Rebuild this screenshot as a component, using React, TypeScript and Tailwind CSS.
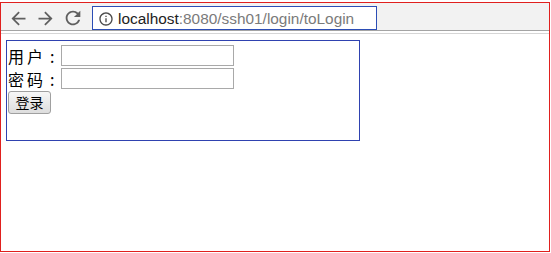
import React from "react";

function BackIcon() {
  return (
    <svg viewBox="0 0 24 24" className="w-[21px] h-[21px] shrink-0" fill="#5f5f5f">
      <path d="M20 11H7.83l5.59-5.59L12 4l-8 8 8 8 1.41-1.41L7.83 13H20v-2z" />
    </svg>
  );
}

function ForwardIcon() {
  return (
    <svg viewBox="0 0 24 24" className="w-[21px] h-[21px] shrink-0" fill="#5f5f5f">
      <path d="M12 4l-1.41 1.41L16.17 11H4v2h12.17l-5.58 5.59L12 20l8-8z" />
    </svg>
  );
}

function ReloadIcon() {
  return (
    <svg viewBox="0 0 24 24" className="w-[22px] h-[22px] shrink-0" fill="#5f5f5f">
      <path d="M17.65 6.35A7.958 7.958 0 0012 4c-4.42 0-7.99 3.58-7.99 8s3.57 8 7.99 8c3.73 0 6.84-2.55 7.73-6h-2.08A5.990 5.99 0 0112 18c-3.31 0-6-2.69-6-6s2.69-6 6-6c1.66 0 3.14.69 4.22 1.78L13 11h7V4l-2.35 2.35z" />
    </svg>
  );
}

function InfoIcon() {
  return (
    <svg viewBox="0 0 24 24" className="w-[16px] h-[16px] shrink-0" fill="#4a4a4a">
      <path d="M11 7h2v2h-2zm0 4h2v6h-2zm1-9C6.48 2 2 6.48 2 12s4.48 10 10 10 10-4.48 10-10S17.52 2 12 2zm0 18c-4.41 0-8-3.59-8-8s3.59-8 8-8 8 3.59 8 8-3.590 8-8 8z" />
    </svg>
  );
}

function Label({ a, b }: { a: string; b: string }) {
  return (
    <span className="w-[53px] shrink-0 flex items-center text-[16px] leading-none">
      <span className="w-[19px]">{a}</span>
      <span className="w-[23px]">{b}</span>
      <span>:</span>
    </span>
  );
}

export default function App() {
  return (
    <div className="w-[551px] h-[253px] bg-white overflow-hidden">
      <div className="mt-[2px] w-[550px] h-[250px] border border-[#e0201e] flex flex-col">
        {/* browser toolbar */}
        <div className="h-[28px] bg-[#f2f2f2] border-b border-[#a4a4a4] flex items-start shrink-0">
          <div className="ml-[7px] mt-[5px] flex items-start">
            <BackIcon />
          </div>
          <div className="ml-[6px] mt-[5px] flex items-start">
            <ForwardIcon />
          </div>
          <div className="ml-[6px] mt-[4px] flex items-start">
            <ReloadIcon />
          </div>
          <div className="ml-[8px] mt-[3px] w-[285px] h-[24px] border border-[#2b4db5] bg-white flex items-center pt-[1px]">
            <div className="ml-[5px]">
              <InfoIcon />
            </div>
            <span
              className="ml-[4px] text-[15.4px] leading-none text-[#7a7a7a]"
              style={{ fontFamily: '"Liberation Sans", Arial, sans-serif' }}
            >
              <span className="text-[#222]">localhost</span>:8080/ssh01/login/toLogin
            </span>
          </div>
        </div>
        <div className="h-[3px] border-b border-[#d6d6d6] bg-white shrink-0" />

        {/* page body */}
        <div className="pl-[5px] pt-[6px]">
          <div
            className="w-[354px] h-[101px] border border-[#2f42b0] pl-[1px] pt-[4px] text-black"
            style={{ fontFamily: '"Noto Sans CJK SC", "Liberation Sans", sans-serif' }}
          >
            <div className="flex items-center h-[21px]">
              <Label a="用" b="户" />
              <input className="w-[173px] h-[21px] border border-[#a9a9a9] bg-white outline-none" />
            </div>
            <div className="flex items-center h-[21px] mt-[2px]">
              <Label a="密" b="码" />
              <input type="password" className="w-[173px] h-[21px] border border-[#a9a9a9] bg-white outline-none" />
            </div>
            <button className="mt-[1px] w-[43px] h-[23px] border border-[#a0a0a0] rounded-[3px] bg-gradient-to-b from-[#f7f7f7] to-[#dddddd] text-[14px] leading-none text-black">
              登录
            </button>
          </div>
        </div>
      </div>
    </div>
  );
}
